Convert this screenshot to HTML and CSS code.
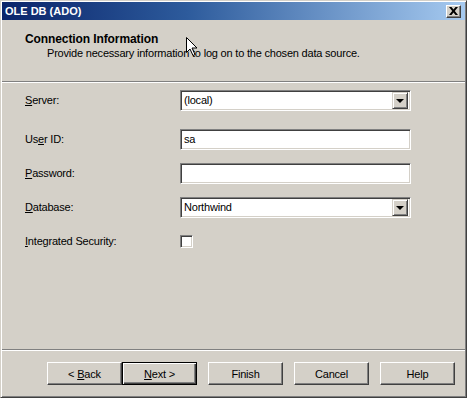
FILE: index.html
```html
<!DOCTYPE html>
<html lang="en">
<head>
    <meta charset="UTF-8">
    <title>OLE DB (ADO)</title>
    <link rel="stylesheet" href="styles.css">
</head>
<body>
    <div class="window">
        <div class="titlebar">
            <span class="title">OLE DB (ADO)</span>
            <span class="close">
                <svg width="9" height="8" viewBox="0 0 9 8">
                    <path d="M0 0h2.5l2 2.6L6.5 0H9L5.8 4 9 8H6.5l-2-2.6-2 2.6H0l3.2-4z" fill="#000"/>
                </svg>
            </span>
        </div>

        <div class="header">
            <h1>Connection Information</h1>
            <p>Provide necessary information to log on to the chosen data source.</p>
        </div>

        <div class="form">
            <div class="row first">
                <label><u>S</u>erver:</label>
                <div class="field combo">
                    <span class="value">(local)</span>
                    <span class="drop"><i></i></span>
                </div>
            </div>
            <div class="row">
                <label>Us<u>e</u>r ID:</label>
                <div class="field"><span class="value">sa</span></div>
            </div>
            <div class="row">
                <label><u>P</u>assword:</label>
                <div class="field"><span class="value"></span></div>
            </div>
            <div class="row">
                <label><u>D</u>atabase:</label>
                <div class="field combo">
                    <span class="value">Northwind</span>
                    <span class="drop"><i></i></span>
                </div>
            </div>
            <div class="row">
                <label><u>I</u>ntegrated Security:</label>
                <span class="check"></span>
            </div>
        </div>

        <div class="footer">
            <div class="pair">
                <button class="btn">&lt; <u>B</u>ack</button>
                <button class="btn default"><u>N</u>ext &gt;</button>
            </div>
            <button class="btn">Finish</button>
            <button class="btn">Cancel</button>
            <button class="btn">Help</button>
        </div>

        <!-- mouse pointer sitting over the header -->
        <svg class="pointer" width="12" height="20" viewBox="0 0 12 20">
            <path d="M0.5 0.5v15l3.5-3.5 3 6.5 2-1-3-6.5h5z" fill="#fff" stroke="#000" stroke-width="1"/>
        </svg>
    </div>
</body>
</html>
```

FILE: styles.css
```css
* {
    margin: 0;
    padding: 0;
    box-sizing: border-box;
}

body {
    font-family: 'Liberation Sans', Arial, sans-serif;
    font-size: 11px;
    letter-spacing: -0.2px;
    color: #000;
    background: #d4d0c8;
}

.window {
    position: relative;
    width: 467px;
    height: 398px;
    display: flex;
    flex-direction: column;
    background: #d4d0c8;
    border: 1px solid;
    border-color: #d4d0c8 #404040 #404040 #d4d0c8;
    box-shadow: inset 1px 1px #fff, inset -1px -1px #808080;
    padding: 1px;
}

.titlebar {
    height: 18px;
    display: flex;
    align-items: center;
    justify-content: space-between;
    padding: 0 4px 0 3px;
    background: linear-gradient(to right, #0a246a 0%, #2d5b9c 40%, #a6caf0 100%);
}

.title {
    color: #fff;
    font-weight: bold;
    font-size: 11px;
    letter-spacing: 0;
}

.close {
    width: 15px;
    height: 13px;
    display: flex;
    align-items: center;
    justify-content: center;
    background: #d4d0c8;
    border: 1px solid;
    border-color: #fff #404040 #404040 #fff;
    box-shadow: inset -1px -1px #808080;
}

.header {
    height: 63px;
    padding: 12px 0 0 23px;
    border-bottom: 1px solid #fff;
    box-shadow: inset 0 -1px #808080;
}

.header h1 {
    font-size: 12px;
    font-weight: bold;
    line-height: 14px;
    letter-spacing: -0.1px;
}

.header p {
    margin: 1px 0 0 22px;
    line-height: 13px;
}

.form {
    flex: 1;
    display: flex;
    flex-direction: column;
    padding-left: 23px;
}

.row {
    height: 34px;
    display: flex;
    align-items: center;
}

.row.first {
    margin-bottom: 5px;
}

.row label {
    width: 155px;
}

.field {
    width: 231px;
    height: 21px;
    display: flex;
    align-items: center;
    background: #fff;
    border: 1px solid;
    border-color: #808080 #fff #fff #808080;
    box-shadow: inset 1px 1px #404040, inset -1px -1px #d4d0c8;
    padding: 0 2px 0 3px;
}

.field .value {
    flex: 1;
}

.drop {
    width: 16px;
    height: 17px;
    display: flex;
    align-items: center;
    justify-content: center;
    background: #d4d0c8;
    border: 1px solid;
    border-color: #d4d0c8 #404040 #404040 #d4d0c8;
    box-shadow: inset 1px 1px #fff, inset -1px -1px #808080;
}

.drop i {
    width: 0;
    height: 0;
    border-left: 4px solid transparent;
    border-right: 4px solid transparent;
    border-top: 4px solid #000;
    margin-top: 1px;
}

.check {
    width: 13px;
    height: 13px;
    background: #fff;
    border: 1px solid;
    border-color: #808080 #fff #fff #808080;
    box-shadow: inset 1px 1px #404040, inset -1px -1px #d4d0c8;
}

.footer {
    height: 47px;
    display: flex;
    justify-content: flex-end;
    gap: 11px;
    padding: 12px 10px 0 0;
    border-top: 1px solid #808080;
    box-shadow: inset 0 1px #fff;
}

.pair {
    display: flex;
}

.btn {
    width: 75px;
    height: 23px;
    font-family: inherit;
    font-size: 11px;
    letter-spacing: -0.2px;
    color: #000;
    background: #d4d0c8;
    border: 1px solid;
    border-color: #fff #404040 #404040 #fff;
    box-shadow: inset -1px -1px #808080;
}

.btn.default {
    border: 1px solid #000;
    box-shadow: inset 1px 1px #fff, inset -1px -1px #404040, inset -2px -2px #808080;
}

.pointer {
    position: absolute;
    left: 185px;
    top: 36px;
}
```
